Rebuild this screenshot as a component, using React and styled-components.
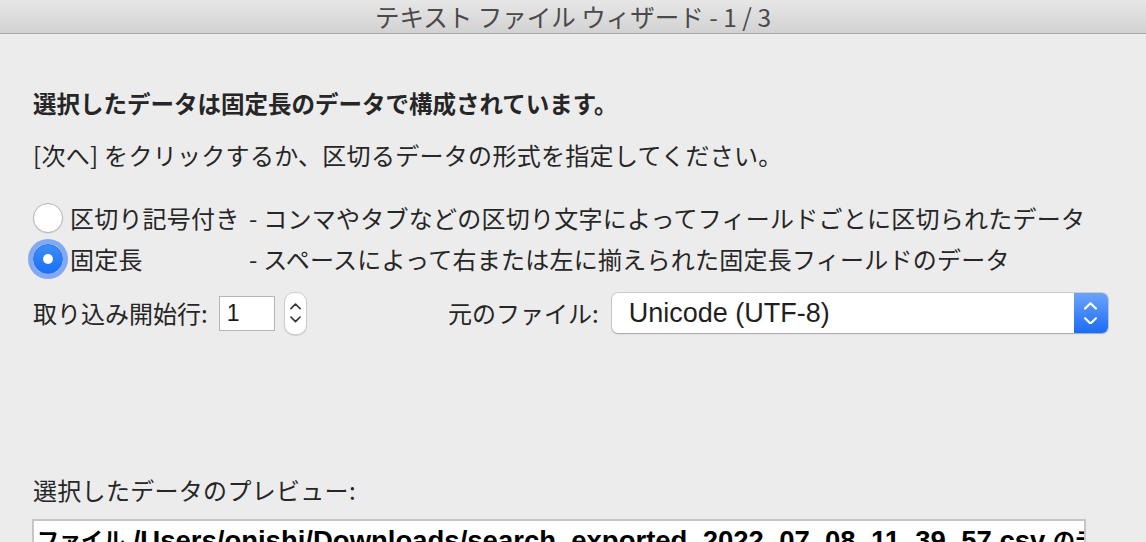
import React, { useState } from "react";
import styled, { createGlobalStyle } from "styled-components";

const GlobalStyle = createGlobalStyle`
   html, body {
      margin: 0;
      padding: 0;
      background: #ececec;
      overflow: hidden;
   }
   body {
      font-family: "Noto Sans CJK JP", "Noto Sans", sans-serif;
      color: #262626;
   }
`

const Window = styled.div`
   width: 1146px;
   height: 542px;
   overflow: hidden;
   display: flex;
   flex-direction: column;
   background: #ececec;
`
const TitleBar = styled.div`
   height: 33px;
   flex-shrink: 0;
   display: flex;
   justify-content: center;
   align-items: center;
   background: linear-gradient(#e7e7e7, #d2d2d2);
   border-bottom: 1px solid #a9a9a9;
   color: #4a4a4a;
   font-size: 24.5px;
   line-height: 33px;
`
const Content = styled.div`
   padding: 54px 33px 0 33px;
   display: flex;
   flex-direction: column;
`
const Text = styled.div`
   font-size: ${props => props.bold ? 23.5 : 24}px;
   letter-spacing: ${props => props.bold ? 0 : 0.3}px;
   line-height: 30px;
   font-weight: ${props => props.bold ? 700 : 400};
   margin-top: ${props => props.top || 0}px;
   white-space: nowrap;
`
const Options = styled.div`
   margin-top: 27px;
   display: grid;
   grid-template-columns: 37px 179px 1fr;
   grid-auto-rows: 41px;
   align-items: center;
`
const Radio = styled.span`
   box-sizing: border-box;
   width: 30px;
   height: 30px;
   border-radius: 50%;
   display: flex;
   justify-content: center;
   align-items: center;
   background: ${props => props.checked ? 'linear-gradient(#3d8df9, #1a6ff6)' : '#fff'};
   border: 1px solid ${props => props.checked ? '#1f6ff0' : '#b9b9b9'};
   box-shadow: ${props => props.checked
      ? '0 0 0 5px rgba(104, 152, 243, 0.8)'
      : '0 0.5px 1px rgba(0,0,0,0.15)'};
   cursor: pointer;
   &::after {
      content: "";
      width: 10px;
      height: 10px;
      border-radius: 50%;
      background: #fff;
      display: ${props => props.checked ? 'block' : 'none'};
   }
`
const OptionLabel = styled.span`
   font-size: 24px;
   letter-spacing: 0.2px;
   line-height: 30px;
   white-space: nowrap;
   cursor: pointer;
`
const OptionDesc = styled.span`
   font-size: 24px;
   letter-spacing: 0.25px;
   line-height: 30px;
   white-space: nowrap;
`
const SettingsRow = styled.div`
   margin-top: 13px;
   height: 42px;
   display: flex;
   align-items: center;
`
const StartGroup = styled.div`
   width: 415px;
   display: flex;
   align-items: center;
`
const FieldLabel = styled.span`
   font-size: 24px;
   line-height: 30px;
   white-space: nowrap;
`
const NumberInput = styled.input`
   box-sizing: border-box;
   width: 56px;
   height: 35px;
   margin-left: 11px;
   padding: 0 0 0 7px;
   border: 1px solid #b5b5b5;
   background: #fff;
   font-family: "Liberation Sans", sans-serif;
   font-size: 23px;
   color: #1a1a1a;
   outline: none;
`
const Stepper = styled.div`
   box-sizing: border-box;
   width: 23px;
   height: 43px;
   margin-left: 9px;
   border-radius: 10px;
   background: #fff;
   border: 1px solid #cdcdcd;
   box-shadow: 0 1px 1px rgba(0,0,0,0.12);
   display: flex;
   flex-direction: column;
   justify-content: center;
   align-items: center;
   gap: 6px;
`
const EncodingGroup = styled.div`
   display: flex;
   align-items: center;
`
const Select = styled.div`
   box-sizing: border-box;
   width: 496px;
   height: 40px;
   margin-left: 13px;
   border-radius: 6px;
   background: #fff;
   box-shadow: 0 0 0 1px rgba(0,0,0,0.13), 0 1px 1.5px rgba(0,0,0,0.2);
   display: flex;
   overflow: hidden;
`
const SelectValue = styled.div`
   flex: 1;
   padding-left: 17px;
   display: flex;
   align-items: center;
   font-family: "Liberation Sans", sans-serif;
   font-size: 27px;
   color: #1f1f1f;
`
const SelectArrows = styled.div`
   width: 34px;
   background: linear-gradient(#6ba3fb, #1b6cf6);
   display: flex;
   flex-direction: column;
   justify-content: center;
   align-items: center;
   gap: 7px;
`
const PreviewBox = styled.div`
   margin-top: 14px;
   margin-left: -1px;
   width: 1054px;
   height: 60px;
   box-sizing: border-box;
   border: 2px solid #c6c6c6;
   background: #fff;
   overflow: hidden;
   padding: 0 0 0 3px;
`
const PreviewLine = styled.div`
   font-family: "Liberation Sans", "Noto Sans CJK JP", sans-serif;
   font-weight: 700;
   font-size: 27.5px;
   line-height: 34px;
   color: #000;
   white-space: nowrap;
`
const Jp = styled.span`
   font-family: "Noto Sans CJK JP", sans-serif;
   font-size: 22px;
   vertical-align: 2px;
`

const Chevron = ({ up, color, size = 12, stroke = 2 }) => (
   <svg width={size} height={size * 0.6} viewBox="0 0 12 7" fill="none">
      <path
         d={up ? "M1 6 L6 1 L11 6" : "M1 1 L6 6 L11 1"}
         stroke={color}
         strokeWidth={stroke}
         strokeLinecap="round"
         strokeLinejoin="round"
      />
   </svg>
)

const options = [
   { id: 'delimited', label: '区切り記号付き', desc: '- コンマやタブなどの区切り文字によってフィールドごとに区切られたデータ' },
   { id: 'fixed', label: '固定長', desc: '- スペースによって右または左に揃えられた固定長フィールドのデータ' },
]

const App = () => {
   const [type, setType] = useState('fixed')

   return (
      <Window>
         <GlobalStyle />
         <TitleBar>テキスト ファイル ウィザード - 1 / 3</TitleBar>
         <Content>
            <Text bold>選択したデータは固定長のデータで構成されています。</Text>
            <Text top={22}>[次へ] をクリックするか、区切るデータの形式を指定してください。</Text>
            <Options>
               {options.map(o => (
                  <React.Fragment key={o.id}>
                     <Radio checked={type === o.id} onClick={() => { setType(o.id) }} />
                     <OptionLabel onClick={() => { setType(o.id) }}>{o.label}</OptionLabel>
                     <OptionDesc>{o.desc}</OptionDesc>
                  </React.Fragment>
               ))}
            </Options>
            <SettingsRow>
               <StartGroup>
                  <FieldLabel>取り込み開始行:</FieldLabel>
                  <NumberInput defaultValue="1" />
                  <Stepper>
                     <Chevron up color="#333" size={11} stroke={1.8} />
                     <Chevron color="#333" size={11} stroke={1.8} />
                  </Stepper>
               </StartGroup>
               <EncodingGroup>
                  <FieldLabel>元のファイル:</FieldLabel>
                  <Select>
                     <SelectValue>Unicode (UTF-8)</SelectValue>
                     <SelectArrows>
                        <Chevron up color="#fff" size={13} stroke={2} />
                        <Chevron color="#fff" size={13} stroke={2} />
                     </SelectArrows>
                  </Select>
               </EncodingGroup>
            </SettingsRow>
            <Text top={141}>選択したデータのプレビュー:</Text>
            <PreviewBox>
               <PreviewLine>
                  <Jp>ファイル</Jp> /Users/onishi/Downloads/search_exported_2022_07_08_11_39_57.csv <Jp>のデータ</Jp>
               </PreviewLine>
            </PreviewBox>
         </Content>
      </Window>
   )
}
export default App
